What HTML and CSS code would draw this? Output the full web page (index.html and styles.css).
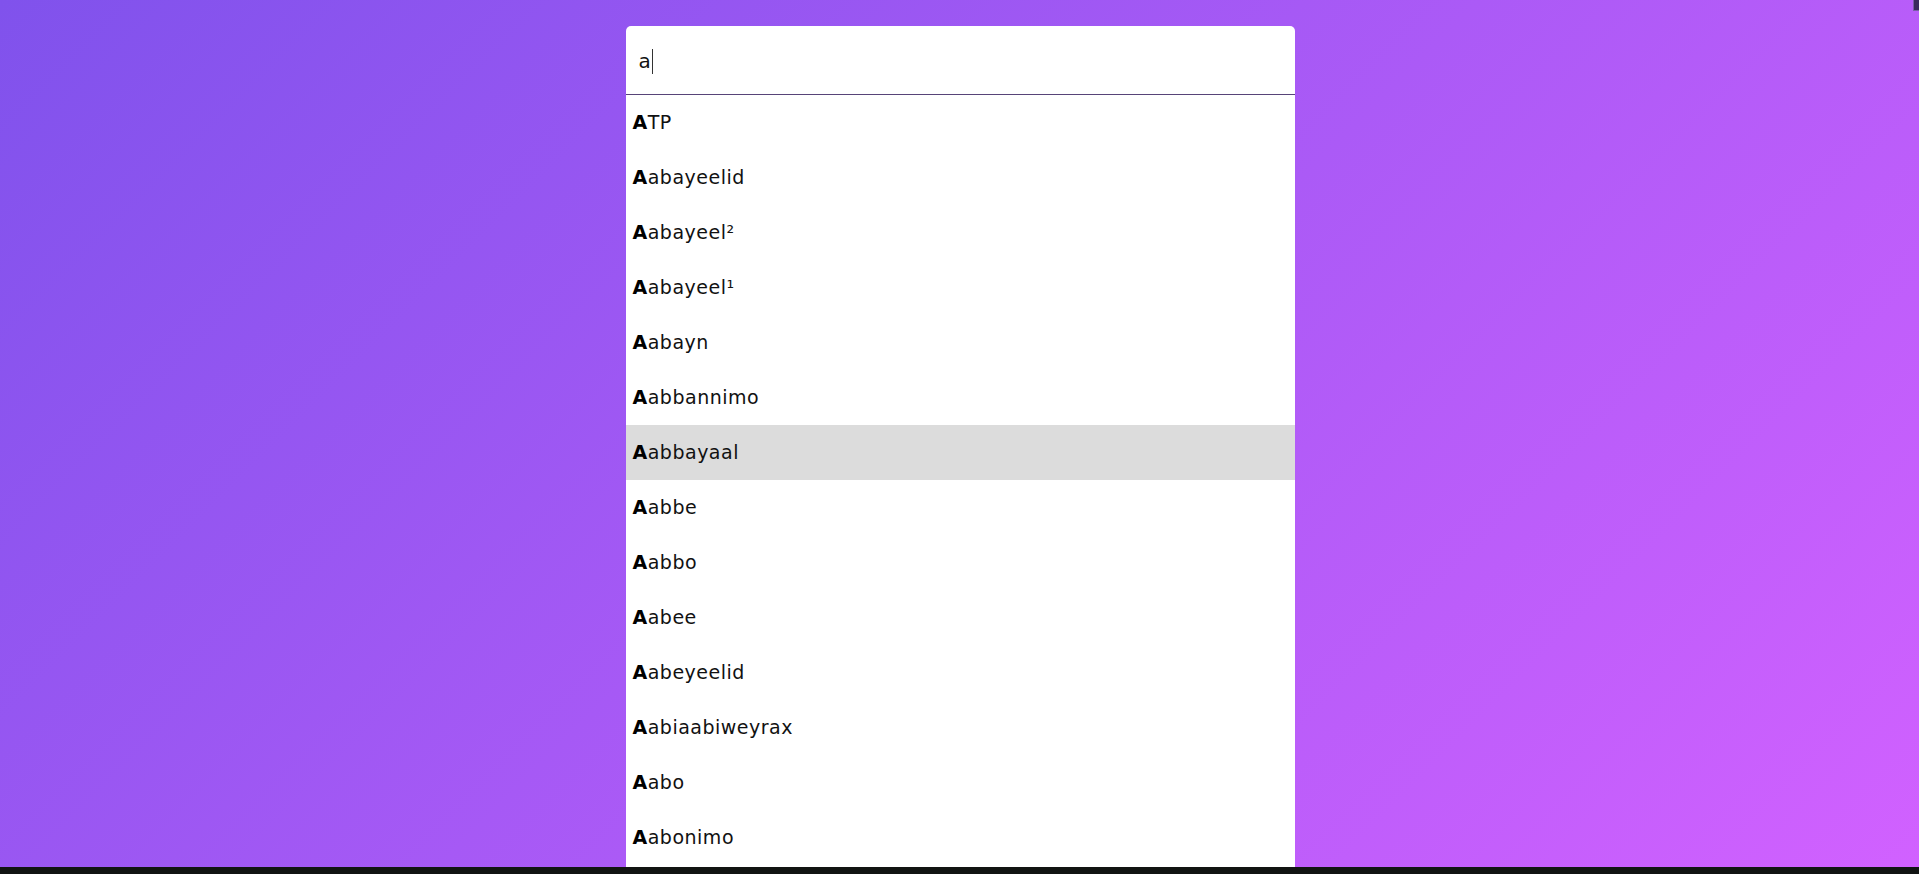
FILE: index.html
```html
<!DOCTYPE html>
<html lang="en">
<head>
<meta charset="utf-8">
<title>Autocomplete</title>
<link rel="stylesheet" href="styles.css">
</head>
<body>
<div class="page">
  <main class="stage">
    <div class="autocomplete">
      <div class="field"><span class="typed">a</span><span class="caret"></span></div>
      <ul class="list">
        <li class="item"><b>A</b>TP</li>
        <li class="item"><b>A</b>abayeelid</li>
        <li class="item"><b>A</b>abayeel²</li>
        <li class="item"><b>A</b>abayeel¹</li>
        <li class="item"><b>A</b>abayn</li>
        <li class="item"><b>A</b>abbannimo</li>
        <li class="item active"><b>A</b>abbayaal</li>
        <li class="item"><b>A</b>abbe</li>
        <li class="item"><b>A</b>abbo</li>
        <li class="item"><b>A</b>abee</li>
        <li class="item"><b>A</b>abeyeelid</li>
        <li class="item"><b>A</b>abiaabiweyrax</li>
        <li class="item"><b>A</b>abo</li>
        <li class="item"><b>A</b>abonimo</li>
      </ul>
    </div>
  </main>
  <div class="bottom-bar"></div>
  <div class="corner-mark"></div>
</div>
</body>
</html>
```
FILE: styles.css
```css
html, body {
  margin: 0;
  padding: 0;
  height: 100%;
}
body {
  font-family: "DejaVu Sans", "Open Sans", sans-serif;
  overflow: hidden;
}
.page {
  position: relative;
  height: 100vh;
  display: flex;
  flex-direction: column;
}
.stage {
  flex: 1;
  min-height: 0;
  overflow: hidden;
  background: linear-gradient(135deg, #8052ec, #d161ff);
  display: flex;
  justify-content: center;
  padding-top: 26px;
  padding-left: 1px;
}
.autocomplete {
  width: 669px;
  background: #fff;
  border-radius: 5px 5px 0 0;
  align-self: flex-start;
  padding-bottom: 30px;
}
.field {
  height: 69px;
  box-sizing: border-box;
  border-bottom: 1px solid #574478;
  display: flex;
  align-items: center;
  padding-left: 13px;
  padding-top: 2px;
  font-size: 20px;
  letter-spacing: 0.5px;
  color: #111;
}
.typed {
  line-height: 1;
}
.caret {
  display: inline-block;
  width: 1px;
  height: 25px;
  background: #333;
  margin-left: 1px;
}
.list {
  list-style: none;
  margin: 0;
  padding: 0;
}
.item {
  height: 55px;
  line-height: 55px;
  padding-left: 7px;
  font-size: 19px;
  letter-spacing: 0.5px;
  color: #111;
}
.item b {
  font-weight: 700;
  color: #000;
}
.item.active {
  background: #dcdcdc;
}
.bottom-bar {
  height: 7px;
  background: #111412;
}
.corner-mark {
  position: absolute;
  top: 0;
  right: 0;
  width: 5px;
  height: 10px;
  background: #3b2a5c;
  border-left: 1px solid #7a5aa8;
  border-bottom: 1px solid #7a5aa8;
}
```
